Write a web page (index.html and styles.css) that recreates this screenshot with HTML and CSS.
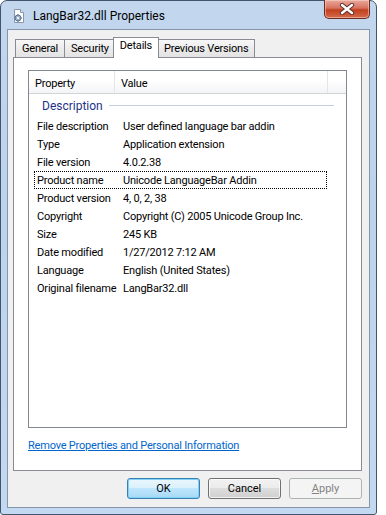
FILE: index.html
```html
<!DOCTYPE html>
<html lang="en">
<head>
    <meta charset="UTF-8">
    <meta name="viewport" content="width=device-width, initial-scale=1.0">
    <title>LangBar32.dll Properties</title>
    <link rel="stylesheet" href="styles.css">
</head>
<body>
    <div class="window">
        <div class="titlebar">
            <svg class="app-icon" width="16" height="16" viewBox="0 0 16 16">
                <path d="M3.5 1.5h6l3 3v10h-9z" fill="#fff" stroke="#8a96a8"/>
                <path d="M9.5 1.5v3h3" fill="#e4e9f0" stroke="#8a96a8"/>
                <circle cx="7" cy="10" r="3" fill="#9fb4cc" stroke="#5d7391"/>
                <circle cx="7" cy="10" r="1.1" fill="#fff"/>
                <path d="M7 6v1.2M7 12.8V14M3 10h1.2M9.8 10H11" stroke="#5d7391"/>
            </svg>
            <span class="title">LangBar32.dll Properties</span>
            <div class="close-btn">
                <svg width="16" height="12" viewBox="0 0 16 12">
                    <path d="M3 2l10 8M13 2L3 10" stroke="#5a2e28" stroke-width="4.2" stroke-linecap="round"/>
                    <path d="M3 2l10 8M13 2L3 10" stroke="#fff" stroke-width="2.4" stroke-linecap="round"/>
                </svg>
            </div>
        </div>
        <div class="client">
            <div class="tabs">
                <div class="tab">General</div>
                <div class="tab">Security</div>
                <div class="tab selected">Details</div>
                <div class="tab">Previous Versions</div>
            </div>
            <div class="panel">
                <div class="listview">
                    <div class="lv-header">
                        <div class="col-head col-prop">Property</div>
                        <div class="col-head col-value">Value</div>
                        <div class="col-head col-rest"></div>
                    </div>
                    <div class="group">
                        <span class="group-name">Description</span>
                        <span class="group-line"></span>
                    </div>
                    <div id="rows"></div>
                </div>
                <a class="link" href="#">Remove Properties and Personal Information</a>
            </div>
            <div class="buttons">
                <button class="btn default">OK</button>
                <button class="btn">Cancel</button>
                <button class="btn disabled"><u>A</u>pply</button>
            </div>
        </div>
    </div>
    <script>
        const details = [
            ["File description", "User defined language bar addin"],
            ["Type", "Application extension"],
            ["File version", "4.0.2.38"],
            ["Product name", "Unicode LanguageBar Addin"],
            ["Product version", "4, 0, 2, 38"],
            ["Copyright", "Copyright (C) 2005 Unicode Group Inc."],
            ["Size", "245 KB"],
            ["Date modified", "1/27/2012 7:12 AM"],
            ["Language", "English (United States)"],
            ["Original filename", "LangBar32.dll"]
        ];

        const rows = document.getElementById("rows");
        details.forEach(([name, value], index) => {
            const row = document.createElement("div");
            row.className = "row";
            if (index === 3) {
                row.classList.add("focused");
            }
            row.innerHTML = `<span class="cell">${name}</span><span class="cell">${value}</span>`;
            rows.appendChild(row);
        });
    </script>
</body>
</html>
```

FILE: styles.css
```css
body {
    margin: 0;
    background: #fff;
    font-family: Roboto, "Noto Sans", sans-serif;
    font-size: 11px;
    letter-spacing: -0.2px;
    color: #000;
}
.window {
    width: 377px;
    height: 515px;
    box-sizing: border-box;
    border: 1px solid #43556c;
    border-radius: 7px 7px 3px 3px;
    background: linear-gradient(#c2d7ee, #bcd3ec 40%, #c3d9f1);
    padding: 0 6px 6px;
    display: flex;
    flex-direction: column;
}
.titlebar {
    height: 28px;
    display: flex;
    align-items: center;
}
.app-icon {
    margin: 2px 6px 0 4px;
}
.title {
    font-size: 12px;
    letter-spacing: 0;
    padding-top: 2px;
    flex: 1;
}
.close-btn {
    align-self: flex-start;
    margin-top: -1px;
    width: 46px;
    height: 19px;
    box-sizing: border-box;
    border: 1px solid #6b2b22;
    border-top: none;
    border-radius: 0 0 5px 5px;
    background: linear-gradient(#e9a99c, #d7725f 45%, #c1401f 55%, #d56a4c);
    box-shadow: inset 0 0 0 1px rgba(255, 220, 210, 0.5);
    display: flex;
    align-items: center;
    justify-content: center;
}
.client {
    flex: 1;
    border: 1px solid #8596ab;
    background: #f0f0f0;
    padding: 7px 7px 8px 5px;
    display: flex;
    flex-direction: column;
}
.tabs {
    height: 20px;
    display: flex;
    align-items: flex-end;
    padding-left: 2px;
}
.tab {
    height: 18px;
    box-sizing: border-box;
    border: 1px solid #898c95;
    border-bottom: none;
    margin-right: -1px;
    padding: 2px 6px 0;
    background: linear-gradient(#f7f7f7, #ececec 50%, #e3e3e3);
}
.tab.selected {
    height: 21px;
    margin: 0 -2px -1px -2px;
    padding: 1px 6px 0;
    background: #fff;
    position: relative;
    z-index: 1;
}
.panel {
    flex: 1;
    border: 1px solid #898c95;
    background: #fff;
    display: flex;
    flex-direction: column;
}
.listview {
    height: 358px;
    box-sizing: border-box;
    margin: 12px 14px 0;
    border: 1px solid #828790;
}
.lv-header {
    height: 22px;
    display: flex;
    border-bottom: 1px solid #d5d5d5;
    background: linear-gradient(#fff, #fff 40%, #f3f4f6);
}
.col-head {
    padding: 6px 0 0 6px;
    box-sizing: border-box;
    border-right: 1px solid #e5e5e5;
}
.col-prop {
    width: 86px;
}
.col-value {
    width: 213px;
}
.col-rest {
    flex: 1;
    border-right: none;
}
.group {
    height: 23px;
    display: flex;
    align-items: center;
    padding: 0 12px 0 13px;
}
.group-name {
    color: #1e3287;
    font-size: 12px;
    letter-spacing: 0;
    padding-right: 6px;
}
.group-line {
    flex: 1;
    height: 1px;
    background: #c5cfe2;
}
.row {
    height: 18px;
    box-sizing: border-box;
    width: 293px;
    margin-left: 5px;
    display: grid;
    grid-template-columns: 86px auto;
    align-items: center;
    padding-left: 2px;
    border: 1px solid transparent;
}
.row.focused {
    border: 1px dotted #000;
}
.link {
    margin: 11px 0 0 14px;
    color: #0066cc;
    font-size: 11px;
}
.buttons {
    margin-top: 7px;
    display: flex;
    justify-content: flex-end;
    gap: 8px;
}
.btn {
    width: 73px;
    height: 21px;
    border: 1px solid #707070;
    border-radius: 3px;
    font-family: Roboto, "Noto Sans", sans-serif;
    font-size: 11px;
    color: #000;
    padding: 0;
    background: linear-gradient(#f2f2f2, #ebebeb 50%, #dddddd 50%, #cfcfcf);
    box-shadow: inset 0 0 0 1px rgba(255, 255, 255, 0.7);
}
.btn.default {
    border-color: #3c7fb1;
    background: linear-gradient(#eaf6fd, #d9f0fc 50%, #bee6fd 50%, #a7d9f5);
    box-shadow: inset 0 0 0 1px #7fd2f5;
}
.btn.disabled {
    border-color: #adb2b5;
    background: #f4f4f4;
    color: #838383;
    box-shadow: none;
}
```
